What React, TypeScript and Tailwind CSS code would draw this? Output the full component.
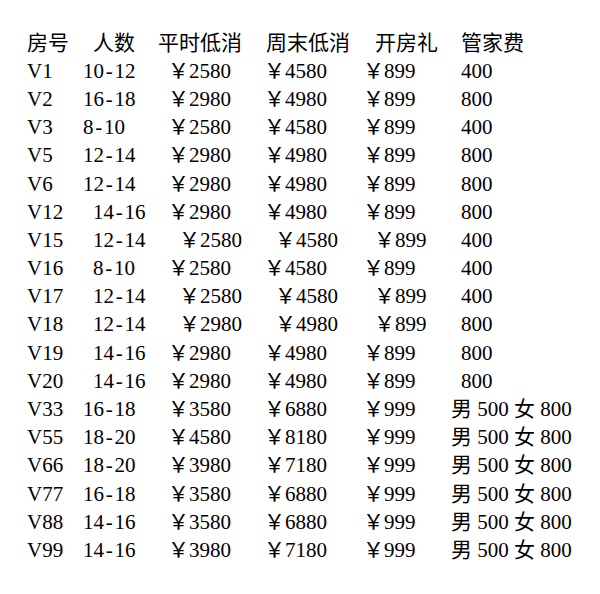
import React from 'react';

type Layout = 'a' | 'b' | 'c' | 'd';

// column widths (px) per spacing variant — the source was hand-spaced text
const widths: Record<Layout, string[]> = {
  a: ['w-[56px]', 'w-[85px]', 'w-[96px]', 'w-[99px]', 'w-[98px]'],
  b: ['w-[66px]', 'w-[75px]', 'w-[96px]', 'w-[99px]', 'w-[98px]'],
  c: ['w-[66px]', 'w-[86px]', 'w-[96px]', 'w-[99px]', 'w-[87px]'],
  d: ['w-[56px]', 'w-[85px]', 'w-[96px]', 'w-[99px]', 'w-[88px]'],
};

const headerWidths = ['w-[66px]', 'w-[65px]', 'w-[108px]', 'w-[109px]', 'w-[86px]'];
const headers = ['房号', '人数', '平时低消', '周末低消', '开房礼', '管家费'];

const rows: { cells: string[]; layout: Layout }[] = [
  { cells: ['V1', '10-12', '￥2580', '￥4580', '￥899', '400'], layout: 'a' },
  { cells: ['V2', '16-18', '￥2980', '￥4980', '￥899', '800'], layout: 'a' },
  { cells: ['V3', '8-10', '￥2580', '￥4580', '￥899', '400'], layout: 'a' },
  { cells: ['V5', '12-14', '￥2980', '￥4980', '￥899', '800'], layout: 'a' },
  { cells: ['V6', '12-14', '￥2980', '￥4980', '￥899', '800'], layout: 'a' },
  { cells: ['V12', '14-16', '￥2980', '￥4980', '￥899', '800'], layout: 'b' },
  { cells: ['V15', '12-14', '￥2580', '￥4580', '￥899', '400'], layout: 'c' },
  { cells: ['V16', '8-10', '￥2580', '￥4580', '￥899', '400'], layout: 'b' },
  { cells: ['V17', '12-14', '￥2580', '￥4580', '￥899', '400'], layout: 'c' },
  { cells: ['V18', '12-14', '￥2980', '￥4980', '￥899', '800'], layout: 'c' },
  { cells: ['V19', '14-16', '￥2980', '￥4980', '￥899', '800'], layout: 'b' },
  { cells: ['V20', '14-16', '￥2980', '￥4980', '￥899', '800'], layout: 'b' },
  { cells: ['V33', '16-18', '￥3580', '￥6880', '￥999', '男 500 女 800'], layout: 'd' },
  { cells: ['V55', '18-20', '￥4580', '￥8180', '￥999', '男 500 女 800'], layout: 'd' },
  { cells: ['V66', '18-20', '￥3980', '￥7180', '￥999', '男 500 女 800'], layout: 'd' },
  { cells: ['V77', '16-18', '￥3580', '￥6880', '￥999', '男 500 女 800'], layout: 'd' },
  { cells: ['V88', '14-16', '￥3580', '￥6880', '￥999', '男 500 女 800'], layout: 'd' },
  { cells: ['V99', '14-16', '￥3980', '￥7180', '￥999', '男 500 女 800'], layout: 'd' },
];

// the source font draws "-" half an em wide, pad it out to match
function Range({ text }: { text: string }) {
  const [from, to] = text.split('-');
  return (
    <>
      {from}
      <span className="px-[1.8px]">-</span>
      {to}
    </>
  );
}

export default function App() {
  return (
    <div className="w-[600px] h-[594px] bg-white text-black pl-[27px] pt-[28.6px] font-['Liberation_Serif','Noto_Sans_CJK_SC',serif] text-[21px] leading-[28.2px] overflow-hidden">
      <div className="flex h-[28.2px] whitespace-pre">
        {headers.map((h, i) => (
          <div key={h} className={`shrink-0 ${headerWidths[i] ?? ''}`}>
            {h}
          </div>
        ))}
      </div>
      {rows.map((r) => (
        <div key={r.cells[0]} className="flex h-[28.2px] whitespace-pre">
          {r.cells.map((c, i) => (
            <div key={i} className={`shrink-0 ${widths[r.layout][i] ?? ''}`}>
              {i === 1 ? <Range text={c} /> : c}
            </div>
          ))}
        </div>
      ))}
    </div>
  );
}
